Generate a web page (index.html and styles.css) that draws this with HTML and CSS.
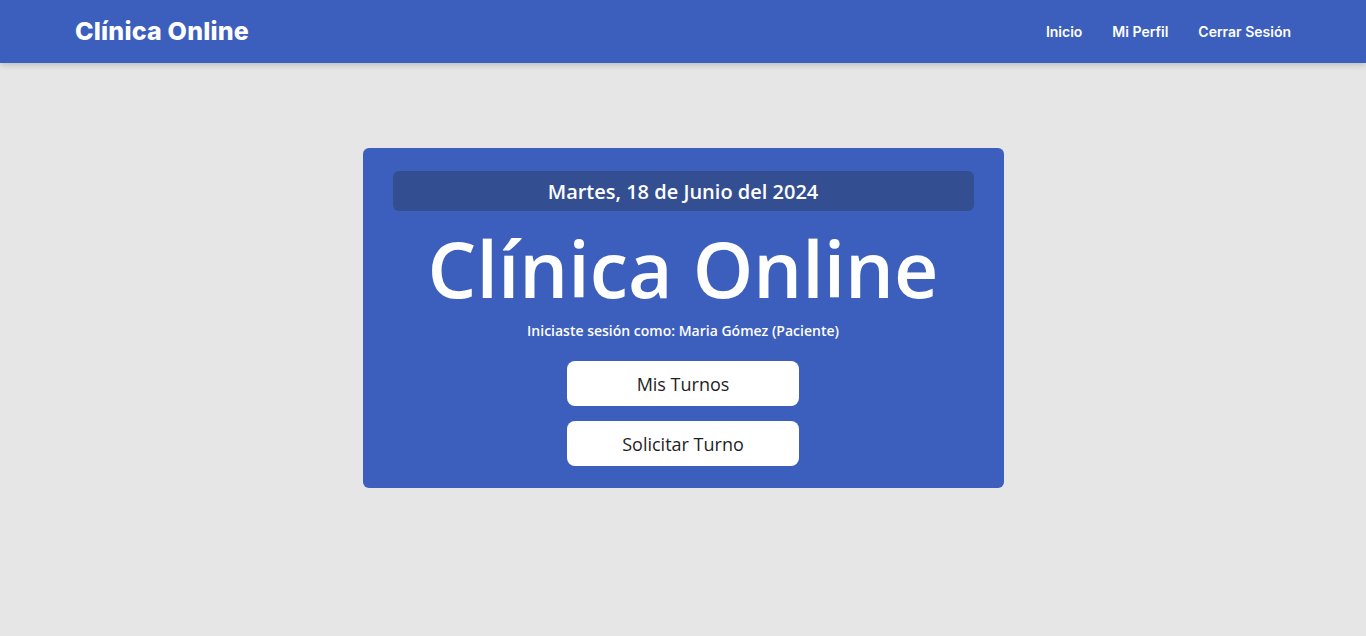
FILE: index.html
```html
<!DOCTYPE html>
<html lang="es">
<head>
<meta charset="utf-8">
<title>Clínica Online</title>
<link rel="stylesheet" href="styles.css">
</head>
<body>
<header class="topbar">
  <a class="brand" href="#">Clínica Online</a>
  <nav class="nav">
    <a href="#">Inicio</a>
    <a href="#">Mi Perfil</a>
    <a href="#">Cerrar Sesión</a>
  </nav>
</header>
<main class="main">
  <section class="card">
    <div class="date">Martes, 18 de Junio del 2024</div>
    <h1 class="title">Clínica Online</h1>
    <p class="session">Iniciaste sesión como: Maria Gómez (Paciente)</p>
    <div class="actions">
      <button class="btn">Mis Turnos</button>
      <button class="btn">Solicitar Turno</button>
    </div>
  </section>
</main>
</body>
</html>
```
FILE: styles.css
```css
* { box-sizing: border-box; }
html, body { margin: 0; height: 100%; }
body {
  background: #e6e6e6;
  font-family: "Open Sans", "Noto Sans", sans-serif;
}
.topbar {
  height: 63px;
  background: #3c5ebd;
  display: flex;
  align-items: center;
  justify-content: space-between;
  padding: 0 75px 1px 75px;
  box-shadow: 0 2px 6px rgba(0,0,0,0.18);
  position: relative;
}
.brand {
  font-family: "Inter", sans-serif;
  font-weight: 800;
  font-size: 25px;
  letter-spacing: 0.2px;
  color: #fff;
  text-decoration: none;
}
.nav { display: flex; gap: 30px; }
.nav a {
  font-family: "Inter", sans-serif;
  font-weight: 600;
  font-size: 14px;
  color: #fff;
  text-decoration: none;
}
.main {
  display: flex;
  justify-content: center;
  padding-top: 85px;
}
.card {
  width: 641px;
  background: #3c5ebd;
  border-radius: 6px;
  padding: 23px 30px 22px;
  display: flex;
  flex-direction: column;
  align-items: center;
}
.date {
  align-self: stretch;
  height: 40px;
  background: #344e92;
  border-radius: 6px;
  color: #fff;
  font-weight: 600;
  font-size: 20px;
  display: flex;
  align-items: center;
  justify-content: center;
}
.title {
  margin: 10px 0 0;
  color: #fff;
  font-weight: 600;
  font-size: 77px;
  line-height: 96px;
  height: 96px;
}
.session {
  margin: 4px 0 0;
  color: #fff;
  font-weight: 600;
  font-size: 14px;
}
.actions {
  display: flex;
  flex-direction: column;
  gap: 15px;
  margin-top: 21px;
}
.btn {
  width: 232px;
  height: 45px;
  border: none;
  border-radius: 8px;
  background: #fff;
  color: #1e1e1e;
  font-family: "Open Sans", "Noto Sans", sans-serif;
  font-size: 18px;
}
```
